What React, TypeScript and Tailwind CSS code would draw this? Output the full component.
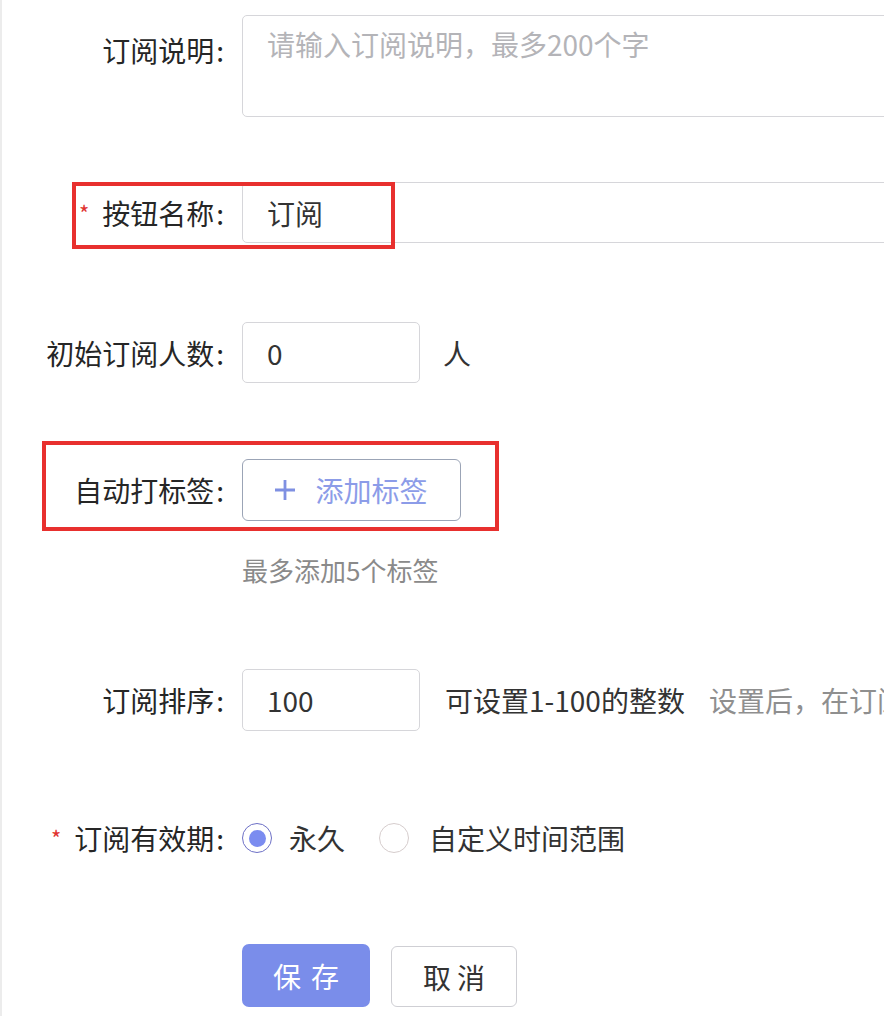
import React from "react";

function Label({ text, required }: { text: string; required?: boolean }) {
  return (
    <div className="w-[222px] shrink-0 text-right whitespace-nowrap h-[36px] leading-[36px] text-[28px] text-[#262626]">
      {required && <span className="text-[#e0322f] text-[22px] mr-[13px] relative top-[-3px]">*</span>}
      <span>{text}</span>
      <span className="ml-[2px]">:</span>
    </div>
  );
}

function Radio({ checked }: { checked?: boolean }) {
  return checked ? (
    <span className="w-[30px] h-[30px] rounded-full border-[1.5px] border-[#6d70c6] flex items-center justify-center shrink-0">
      <span className="block w-[17px] h-[17px] rounded-full bg-[#7b8cf0]" />
    </span>
  ) : (
    <span className="block w-[30px] h-[30px] rounded-full border border-[#d6cdcd] bg-white shrink-0" />
  );
}

export default function App() {
  return (
    <div className="relative w-[884px] h-[1016px] overflow-hidden bg-white border-l-2 border-[#ececec] font-['Noto_Sans_CJK_SC','Noto_Sans',sans-serif] text-[#262626]">
      <div className="flex flex-col pt-[15px]">
        {/* Row 1 */}
        <div className="flex items-start gap-[18px]">
          <div className="mt-[17px]">
            <Label text="订阅说明" />
          </div>
          <textarea
            placeholder="请输入订阅说明，最多200个字"
            className="w-[700px] h-[102px] shrink-0 resize-none rounded-[5px] border border-[#d6d6da] bg-white px-[24px] py-[10px] text-[28px] leading-[36px] text-[#333] placeholder:text-[#b4b4b8] outline-none"
          />
        </div>

        {/* Row 2 */}
        <div className="flex items-center gap-[18px] mt-[65px]">
          <Label text="按钮名称" required />
          <div className="w-[700px] h-[61px] shrink-0 rounded-[5px] border border-[#d6d6da] bg-white px-[24px] flex items-center text-[28px] text-[#333]">
            订阅
          </div>
        </div>

        {/* Row 3 */}
        <div className="flex items-center gap-[18px] mt-[79px]">
          <Label text="初始订阅人数" />
          <div className="w-[178px] h-[61px] shrink-0 rounded-[5px] border border-[#d6d6da] bg-white px-[24px] flex items-center text-[28px] text-[#333]">
            0
          </div>
          <span className="ml-[5px] text-[28px] text-[#333]">人</span>
        </div>

        {/* Row 4 */}
        <div className="flex items-center gap-[18px] mt-[76px]">
          <Label text="自动打标签" />
          <button className="w-[219px] h-[62px] shrink-0 rounded-[6px] border border-[#9ba4b6] bg-white flex items-center justify-center gap-[20px]">
            <svg width="20" height="20" viewBox="0 0 20 20">
              <path d="M10 0V20M0 10H20" stroke="#7f90e2" strokeWidth="2.8" />
            </svg>
            <span className="text-[28px] leading-[36px] text-[#8c9ce8]">添加标签</span>
          </button>
        </div>
        <div className="mt-[31px] pl-[240px] h-[36px] leading-[36px] text-[26px] text-[#8a8a8a] whitespace-nowrap">
          最多添加5个标签
        </div>

        {/* Row 5 */}
        <div className="flex items-center gap-[18px] mt-[81px]">
          <Label text="订阅排序" />
          <div className="w-[178px] h-[62px] shrink-0 rounded-[5px] border border-[#d6d6da] bg-white px-[24px] flex items-center text-[28px] text-[#333]">
            100
          </div>
          <span className="ml-[7px] text-[28px] text-[#333] whitespace-nowrap">可设置1-100的整数</span>
          <span className="ml-[6px] text-[28px] text-[#8f8f8f] whitespace-nowrap">设置后，在订阅</span>
        </div>

        {/* Row 6 */}
        <div className="flex items-center gap-[18px] mt-[89px]">
          <Label text="订阅有效期" required />
          <div className="flex items-center">
            <Radio checked />
            <span className="ml-[17px] text-[28px] text-[#333] leading-[36px]">永久</span>
            <span className="ml-[34px] flex">
              <Radio />
            </span>
            <span className="ml-[20px] text-[28px] text-[#333] leading-[36px] whitespace-nowrap">自定义时间范围</span>
          </div>
        </div>

        {/* Buttons */}
        <div className="flex items-start gap-[21px] mt-[88px] pl-[240px]">
          <button className="w-[128px] h-[63px] rounded-[7px] bg-[#7a8dea] text-white text-[28px] flex items-center justify-center gap-[10px]">
            <span>保</span>
            <span>存</span>
          </button>
          <button className="w-[126px] h-[61px] mt-[2px] rounded-[6px] border border-[#cfcfd4] bg-white text-[#333] text-[28px] flex items-center justify-center gap-[6px]">
            <span>取</span>
            <span>消</span>
          </button>
        </div>
      </div>

      {/* Red annotation boxes */}
      <div className="absolute left-[70px] top-[182px] w-[323px] h-[67px] border-[4px] border-[#e8302e] pointer-events-none" />
      <div className="absolute left-[40px] top-[441px] w-[457px] h-[90px] border-[4px] border-[#e8302e] pointer-events-none" />
    </div>
  );
}
